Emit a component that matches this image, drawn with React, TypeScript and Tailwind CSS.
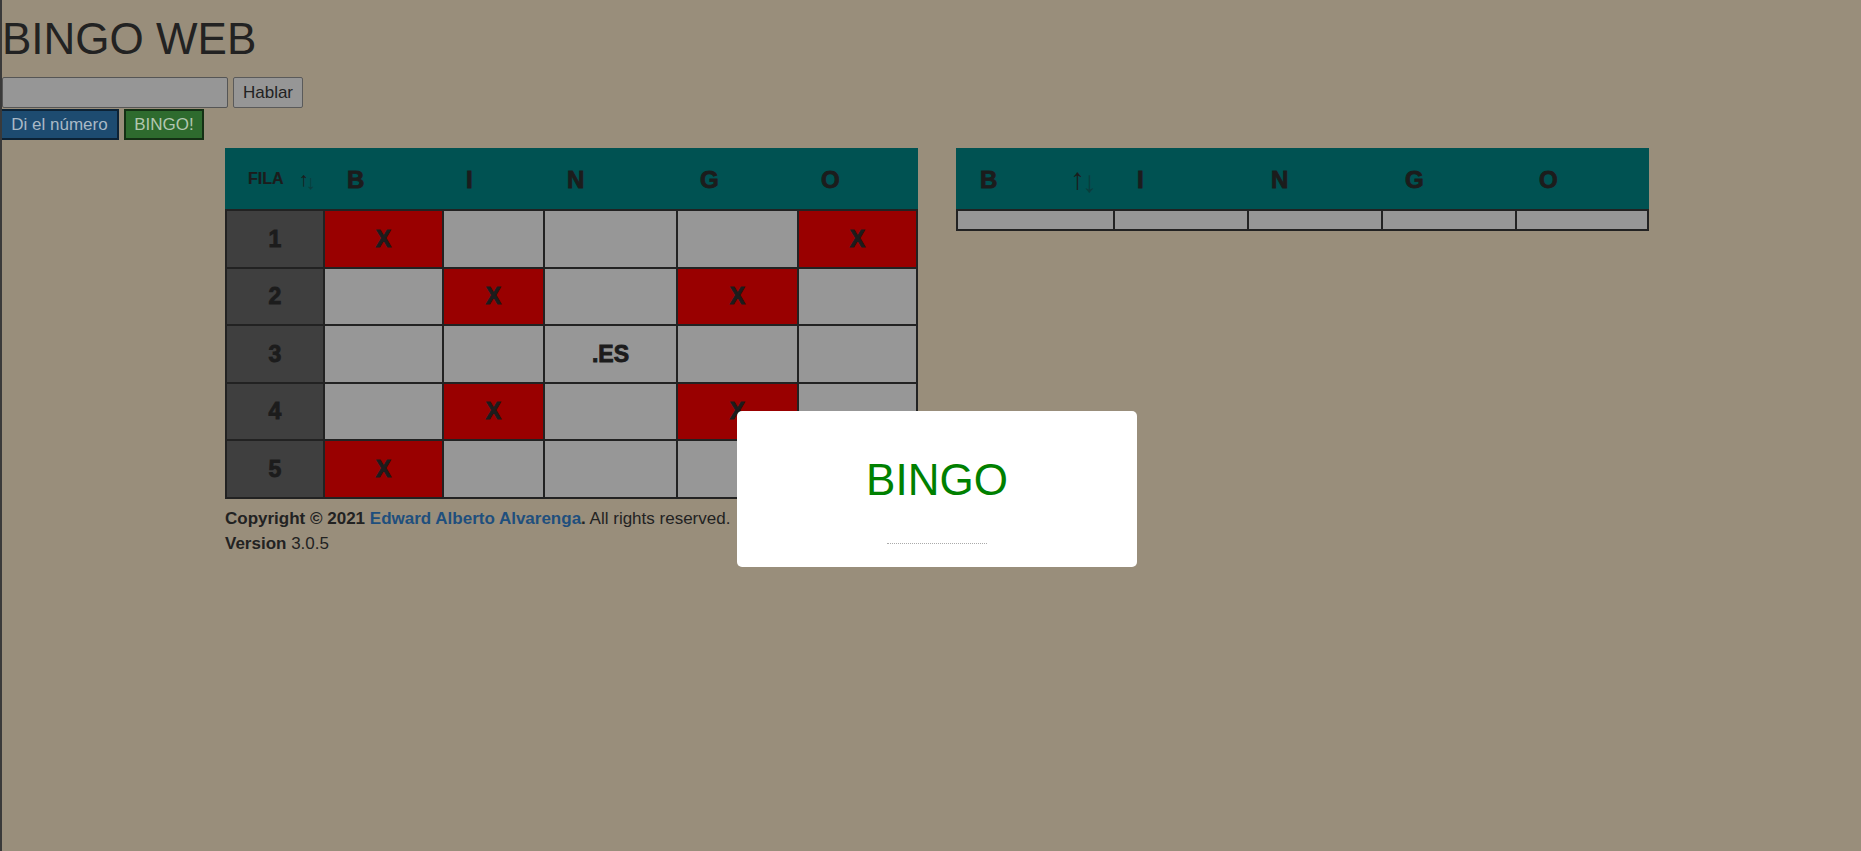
import React from "react";

const font = { fontFamily: '"Liberation Sans", Arial, sans-serif' };

const board: (string | null)[][] = [
  ["X", null, null, null, "X"],
  [null, "X", null, "X", null],
  [null, null, ".ES", null, null],
  [null, "X", null, "X", null],
  ["X", null, null, null, null],
];

const letters = ["B", "I", "N", "G", "O"];

function Arrows({ big }: { big?: boolean }) {
  return (
    <span className={big ? "flex items-start text-[30px] leading-none" : "flex items-start text-[20px] leading-none"}>
      <span className="text-[#1c1c1c]">↑</span>
      <span className="text-[#1c1c1c] opacity-40 relative top-[3px] -ml-[3px]">↓</span>
    </span>
  );
}

const heavy = "font-black text-[#1c1c1c] [-webkit-text-stroke:0.9px_#1c1c1c]";

export default function App() {
  return (
    <div style={font} className="w-full h-[851px] bg-[#998e7b] border-l-2 border-[#3a3a3a] text-[#222] overflow-hidden relative">
      <h1 className="text-[44px] leading-[50px] font-normal mt-[14px] mb-[13px] text-[#222]">BINGO WEB</h1>
      <div className="flex gap-[5px]">
        <input className="w-[226px] h-[31px] bg-[#969696] border border-[#555] rounded-[2px] outline-none" />
        <button className="w-[70px] h-[31px] bg-[#969696] border border-[#5a5a5a] rounded-[2px] text-[17px] text-[#222]">Hablar</button>
      </div>
      <div className="flex gap-[5px] mt-[1px] -ml-[2px]">
        <button className="w-[119px] h-[31px] bg-[#1d4b70] border-2 border-[#0c2235] text-[17px] text-[#a9b9c6]">Di el número</button>
        <button className="w-[80px] h-[31px] bg-[#2e6b2e] border-2 border-[#143014] text-[17px] text-[#b3c7b0]">BINGO!</button>
      </div>

      <div className="flex items-start gap-[38px] ml-[223px] mt-[8px]">
        {/* Table 1 */}
        <div className="w-[693px]">
          <div className="grid grid-cols-[96px_117px_99px_131px_119px_117px] gap-x-[2px] px-[2px] h-[61px] bg-[#005252] items-center">
            <div className="flex items-center pl-[21px] gap-[15px] pt-[1px]">
              <span className="text-[16px] font-bold text-[#1c1c1c] [-webkit-text-stroke:0.2px_#1c1c1c]">FILA</span>
              <Arrows />
            </div>
            {letters.map((l) => (
              <div key={l} className={"pl-[22px] pt-[3px] text-[24px] " + heavy}>{l}</div>
            ))}
          </div>
          <div className="grid grid-cols-[96px_117px_99px_131px_119px_117px] auto-rows-[55.5px] gap-[2px] p-[2px] bg-[#222]">
            {board.map((row, r) => (
              <React.Fragment key={r}>
                <div className={"bg-[#3f3f3f] flex items-center justify-center text-[23px] " + heavy}>{r + 1}</div>
                {row.map((c, i) => (
                  <div
                    key={i}
                    className={
                      (c === "X" ? "bg-[#990000] " : "bg-[#979797] ") +
                      "flex items-center justify-center text-[23px] " +
                      heavy
                    }
                  >
                    {c}
                  </div>
                ))}
              </React.Fragment>
            ))}
          </div>
          <div className="mt-[7px] text-[17px] leading-[25px] whitespace-nowrap">
            <div>
              <b>Copyright © 2021 </b>
              <b className="text-[#1f4f7d]">Edward Alberto Alvarenga</b>
              <b>.</b> All rights reserved.
            </div>
            <div>
              <b>Version</b> 3.0.5
            </div>
          </div>
        </div>

        {/* Table 2 */}
        <div className="w-[693px]">
          <div className="grid grid-cols-[155px_132px_132px_132px_130px] gap-x-[2px] px-[2px] h-[61px] bg-[#005252] items-center">
            <div className="flex items-center justify-between pr-[16px]">
              <span className={"pl-[22px] pt-[3px] text-[24px] " + heavy}>B</span>
              <Arrows big />
            </div>
            {letters.slice(1).map((l) => (
              <div key={l} className={"pl-[22px] pt-[3px] text-[24px] " + heavy}>{l}</div>
            ))}
          </div>
          <div className="grid grid-cols-[155px_132px_132px_132px_130px] auto-rows-[18px] gap-[2px] p-[2px] bg-[#222]">
            {letters.map((l) => (
              <div key={l} className="bg-[#979797]" />
            ))}
          </div>
        </div>
      </div>

      {/* Modal */}
      <div className="absolute left-[735px] top-[411px] w-[400px] h-[156px] bg-white rounded-[5px] flex flex-col items-center">
        <div className="mt-[44px] text-[44px] leading-[50px] text-[#008000]">BINGO</div>
        <div className="mt-[38px] w-[100px] border-t border-dotted border-[#aaa]" />
      </div>
    </div>
  );
}
